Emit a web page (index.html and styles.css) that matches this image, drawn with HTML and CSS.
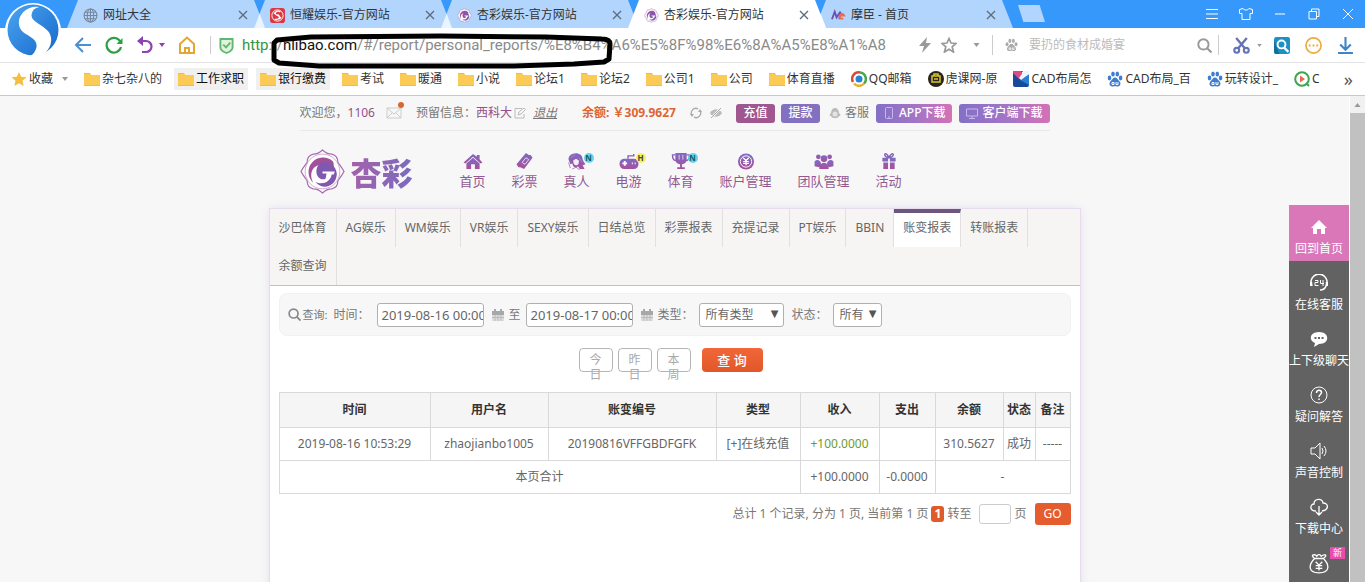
FILE: index.html
```html
<!DOCTYPE html>
<html lang="zh-CN">
<head>
<meta charset="utf-8">
<title>杏彩娱乐-官方网站</title>
<link rel="stylesheet" href="styles.css">
</head>
<body>
<svg class="defs" aria-hidden="true">
  <defs>
    <linearGradient id="purple" x1="0" y1="0" x2="0" y2="1"><stop offset="0" stop-color="#7c6cc4"/><stop offset="1" stop-color="#a94f9b"/></linearGradient>
    <linearGradient id="swirl" x1="0" y1="0" x2="1" y2="1"><stop offset="0" stop-color="#4aa5f2"/><stop offset="1" stop-color="#1668c9"/></linearGradient>
    <symbol id="folder" viewBox="0 0 16 14"><path d="M0 1h6l1 2h9v11H0z" fill="#f0bd3c"/><path d="M0 2h6l1 1h9v10H0z" fill="#fccb55"/></symbol>
    <symbol id="paw" viewBox="0 0 16 16"><ellipse cx="2.500" cy="7" rx="1.800" ry="2.400"/><ellipse cx="6" cy="3" rx="1.800" ry="2.600"/><ellipse cx="10.300" cy="3" rx="1.800" ry="2.600"/><ellipse cx="13.600" cy="7" rx="1.800" ry="2.400"/><path d="M8 6.500c2 0 2.700 2 4 3.200 3 2.800 1 6.300-2 5.700-1.300-.3-2.700-.3-4 0-3 .6-5-2.900-2-5.700C5.300 8.500 6 6.500 8 6.500z"/><path d="M5 11.500h2v2H5zM9 11v2.500h2V11" fill="none" stroke="#fff"/></symbol>
    <symbol id="close" viewBox="0 0 10 10"><path d="M1 1l8 8M9 1l-8 8" fill="none" stroke="currentColor" stroke-width="1.300"/></symbol>
    <symbol id="caret" viewBox="0 0 6 4"><path d="M0 0h6L3 4z" fill="currentColor"/></symbol>
    <symbol id="flower" viewBox="0 0 44 44"><path d="M22 1c3 3 5 4 9 4 4 1 6 3 6 8 2 3 4 5 6 9-2 4-4 6-6 9 0 5-2 7-6 8-4 0-6 1-9 4-3-3-5-4-9-4-4-1-6-3-6-8-2-3-4-5-6-9 2-4 4-6 6-9 0-5 2-7 6-8 4 0 6-1 9-4z" fill="#fff" stroke="#a76bb0" stroke-width="1.200"/><circle cx="22" cy="22" r="17" fill="none" stroke="#c69acb" stroke-width=".8"/><path d="M32 12A14 14 0 1 0 13 33c-4-7-2-15 5-17 4-1 8 0 10 3l5-2c0-2 0-4-1-5z" fill="#a2509c"/><path d="M30 14c-6-4-14 0-14 8 0 6 5 9 9 7l1-5h-4v-2h12l-1 3h-2c-1 7-9 11-16 7 7 9 20 5 21-7 0-4-2-8-6-11z" fill="#8058ad"/></symbol>
    <symbol id="calendar" viewBox="0 0 12 12"><path d="M0 2h12v4H0zM2 0h2v2H2zM8 0h2v2H8z" fill="#a8a8a8"/><path d="M0 6h12v6H0z" fill="#ddd"/><path d="M0 8.500h12M3 6v6M6 6v6M9 6v6" stroke="#bbb"/></symbol>
    <symbol id="lens" viewBox="0 0 14 14"><circle cx="6" cy="6" r="4.800" fill="none" stroke="currentColor" stroke-width="1.800"/><path d="M9.500 9.500l4 4" stroke="currentColor" stroke-width="2"/></symbol>
  </defs>
</svg>

<header class="browser">
  <svg class="browser-logo" viewBox="0 0 60 56"><circle cx="31" cy="30" r="28" fill="#fff"/><circle cx="31" cy="29" r="25.500" fill="url(#swirl)"/><path d="M37 6C20 4 11 22 21 31c6 5 18 8 12 19-1 3-4 5-8 6 19 4 30-15 21-26C39 22 27 20 30 12c1-4 4-5 7-6z" fill="#fff"/></svg>
  <div class="tabs">
    <div class="tab"><svg class="fav" viewBox="0 0 14 14"><g fill="none" stroke="#75879d"><circle cx="7" cy="7" r="6"/><ellipse cx="7" cy="7" rx="3" ry="6"/><path d="M1 7h12M7 1v12M2 4h10M2 10h10"/></g></svg><span>网址大全</span><button aria-label="关闭"><svg><use href="#close"/></svg></button></div>
    <div class="tab"><svg class="fav" viewBox="0 0 16 16"><rect width="16" height="16" rx="3" fill="#dc3844"/><circle cx="8" cy="8" r="6" fill="none" stroke="#fff"/><path d="M11 4C6 2 4 6 7 7.500s5 2 2 4.500M5 12c5 1 7-3 3-5M4 6l3-2M12 10l-3 2" fill="none" stroke="#fff" stroke-width="1.300"/></svg><span>恒耀娱乐-官方网站</span><button aria-label="关闭"><svg><use href="#close"/></svg></button></div>
    <div class="tab"><svg class="fav"><use href="#flower"/></svg><span>杏彩娱乐-官方网站</span><button aria-label="关闭"><svg><use href="#close"/></svg></button></div>
    <div class="tab active"><svg class="fav"><use href="#flower"/></svg><span>杏彩娱乐-官方网站</span><button aria-label="关闭"><svg><use href="#close"/></svg></button></div>
    <div class="tab"><svg class="fav" viewBox="0 0 16 14"><path d="M1 11L4 3l2 6 4-6-1 8" fill="none" stroke="#6c4fb0" stroke-width="2"/><path d="M10 7h4a2.500 2.500 0 1 0-1 3" fill="none" stroke="#ee6a4c" stroke-width="2"/></svg><span>摩臣 - 首页</span><button aria-label="关闭"><svg><use href="#close"/></svg></button></div>
    <button class="new-tab" aria-label="新标签页"></button>
    <div class="window-controls">
      <button aria-label="菜单"><svg viewBox="0 0 14 14"><path d="M1 2.500h12M1 7h12M1 11.500h12"/></svg></button>
      <button aria-label="皮肤"><svg viewBox="0 0 14 14"><path d="M4 1.500c1 2 5 2 6 0l3.500 1v4H11v6H3v-6H.500v-4z"/></svg></button>
      <button aria-label="最小化"><svg viewBox="0 0 14 14"><path d="M2 7h10"/></svg></button>
      <button aria-label="还原"><svg viewBox="0 0 14 14"><path d="M2 4.500h7.500V12H2zM4.500 4V2H12v7.500H10"/></svg></button>
      <button aria-label="关闭窗口"><svg viewBox="0 0 14 14"><path d="M2 2l10 10M12 2L2 12"/></svg></button>
    </div>
  </div>

  <div class="toolbar">
    <div class="nav-tools">
      <button aria-label="后退"><svg viewBox="0 0 18 18"><path d="M17 9H2M9 2L2 9l7 7" fill="none" stroke="#4a8fd0" stroke-width="2"/></svg></button>
      <button aria-label="刷新"><svg viewBox="0 0 18 18"><path d="M15.500 6A7.300 7.300 0 1 0 16 11" fill="none" stroke="#2ba143" stroke-width="2.200"/><path d="M17.500 2v6h-6z" fill="#2ba143"/></svg></button>
      <button aria-label="撤销"><svg viewBox="0 0 18 18"><path d="M3 5h7a5.500 5.500 0 0 1 0 11H6" fill="none" stroke="#8b42b3" stroke-width="2.200"/><path d="M7 0v10L1 5z" fill="#8b42b3"/></svg></button>
      <svg class="caret violet"><use href="#caret"/></svg>
      <button aria-label="主页"><svg viewBox="0 0 18 18"><path d="M2 8l7-6.500L16 8v9H2zM7 17v-5h4v5" fill="none" stroke="#e6a530" stroke-width="2"/></svg></button>
    </div>
    <div class="address">
      <svg class="shield" viewBox="0 0 16 18"><path d="M1.500 2h13v9c0 3-4 5-6.500 6-2.500-1-6.500-3-6.500-6z" fill="#dff3e1" stroke="#61b86c" stroke-width="2"/><path d="M4.500 8l3 3L12 6" fill="none" stroke="#61b86c" stroke-width="2"/></svg>
      <span class="url"><span class="scheme">http</span>://<b>nlibao.com</b>/#/report/personal_reports/%E8%B4%A6%E5%8F%98%E6%8A%A5%E8%A1%A8</span>
      <svg class="marker" viewBox="0 0 344 40"><path d="M5 29V12l3-3 34-3 130-1 105 1 56 2q8 0 8 5l-1 15-5 3-30 2-60 2H50l-40-3z" fill="none" stroke="#000" stroke-width="5" stroke-linejoin="round"/></svg>
    </div>
    <div class="address-tools">
      <svg class="bolt" viewBox="0 0 12 16"><path d="M8 0L0 9h5l-2 7 9-10H7z" fill="#999"/></svg>
      <svg class="star" viewBox="0 0 16 16"><path d="M8 1.500l2 4.500 5 .5-3.800 3.300L12.500 15 8 12.200 3.500 15l1.300-5.200L1 6.500 6 6z" fill="none" stroke="#999" stroke-width="1.700"/></svg>
      <svg class="caret"><use href="#caret"/></svg>
    </div>
    <div class="search">
      <svg class="paw"><use href="#paw"/></svg>
      <input type="text" aria-label="搜索" placeholder="要扔的食材成婚宴">
      <svg class="lens"><use href="#lens"/></svg>
    </div>
    <div class="extensions">
      <svg class="tool" viewBox="0 0 16 16"><path d="M3 1l8.500 10M13 1L4.500 11" stroke="#6673b5" stroke-width="2.200"/><g fill="none" stroke="#6673b5" stroke-width="2"><circle cx="3.500" cy="12.500" r="2.300"/><circle cx="12.500" cy="12.500" r="2.300"/></g></svg>
      <svg class="caret small"><use href="#caret"/></svg>
      <svg class="tool" viewBox="0 0 16 16"><rect x="1" width="15" height="16" rx="2" fill="#1c91c4"/><path d="M1 3l5 13H3a2 2 0 0 1-2-2z" fill="#126f9c"/><circle cx="8" cy="7" r="3.700" fill="none" stroke="#fff" stroke-width="1.800"/><path d="M10.500 10l4 4" stroke="#fff" stroke-width="2"/></svg>
      <svg class="tool" viewBox="0 0 18 18"><circle cx="9" cy="9" r="8" fill="none" stroke="#ecab43" stroke-width="1.800"/><path d="M4 8h2v2H4zM8 8h2v2H8zM12 8h2v2h-2z" fill="#ecab43"/></svg>
      <svg class="tool" viewBox="0 0 16 16"><path d="M8 0v11M3 7l5 5 5-5M1 15h14" fill="none" stroke="#3b86c8" stroke-width="2"/></svg>
    </div>
  </div>

  <nav class="bookmarks">
    <a href="#"><svg viewBox="0 0 16 16"><path d="M8 1l2.200 4.700 5.300.6-4 3.500 1.200 5.200L8 12.300 3.300 15l1.200-5.200-4-3.500 5.300-.6z" fill="#f6bd42"/></svg>收藏<svg class="caret"><use href="#caret"/></svg></a>
    <a href="#"><svg><use href="#folder"/></svg>杂七杂八的</a>
    <a href="#" class="lit"><svg><use href="#folder"/></svg>工作求职</a>
    <a href="#" class="lit"><svg><use href="#folder"/></svg>银行缴费</a>
    <a href="#"><svg><use href="#folder"/></svg>考试</a>
    <a href="#"><svg><use href="#folder"/></svg>暖通</a>
    <a href="#"><svg><use href="#folder"/></svg>小说</a>
    <a href="#"><svg><use href="#folder"/></svg>论坛1</a>
    <a href="#"><svg><use href="#folder"/></svg>论坛2</a>
    <a href="#"><svg><use href="#folder"/></svg>公司1</a>
    <a href="#"><svg><use href="#folder"/></svg>公司</a>
    <a href="#"><svg><use href="#folder"/></svg>体育直播</a>
    <a href="#"><svg viewBox="0 0 16 16"><g fill="none" stroke-width="2.500"><path d="M9 1.500a6.500 6.500 0 0 1 4 11" stroke="#4aa64a"/><path d="M13 12.500a6.500 6.500 0 0 1-10 0" stroke="#edae2e"/><path d="M2 11A6.500 6.500 0 0 1 9 1.500" stroke="#dc4636"/></g><circle cx="8" cy="8" r="3.500" fill="#2782cf"/></svg>QQ邮箱</a>
    <a href="#"><svg viewBox="0 0 16 16"><circle cx="8" cy="8" r="8" fill="#27251b"/><path d="M4 5h8v6H4zM6 8h4M6 5V3h4v2" fill="none" stroke="#d8c52e" stroke-width="1.500"/></svg>虎课网-原</a>
    <a href="#"><svg viewBox="0 0 16 16"><path d="M0 0h10L7 4l9 2v8a2 2 0 0 1-2 2H2a2 2 0 0 1-2-2z" fill="#174a9b"/><path d="M0 0h8l2 4-4 4-6-6z" fill="#e24a86"/><path d="M16 3v11L7 9z" fill="#2a7fcf"/><path d="M11 0h5v3L8 9 6 7z" fill="#eef4fb"/></svg>CAD布局怎</a>
    <a href="#"><svg class="blue"><use href="#paw"/></svg>CAD布局_百</a>
    <a href="#"><svg class="blue"><use href="#paw"/></svg>玩转设计_</a>
    <a href="#"><svg viewBox="0 0 16 16"><circle cx="8" cy="8" r="6.800" fill="none" stroke="#3ca550" stroke-width="2"/><path d="M12 12l3 3" stroke="#3ca550" stroke-width="2"/><path d="M6 4.500v7L11 8z" fill="#e66a50"/></svg>C</a>
    <button class="more" aria-label="更多书签">»</button>
  </nav>
</header>

<div class="viewport">
  <div class="page">
    <div class="site-head">
      <div class="account">
        <span>欢迎您，<em>1106</em></span>
        <span class="mail"><svg viewBox="0 0 18 12"><path d="M1 1h14v10H1zM1 1l7 6 7-6M1 11l5-5M15 11l-5-5" fill="none" stroke="#ccc"/></svg><i></i></span>
        <span class="info">预留信息：<em>西科大</em><svg viewBox="0 0 12 12"><path d="M8 1.500H1v9.500h9V7M4 8l1-3 5-4 1.500 1.500L7 7z" fill="none" stroke="#bbb"/></svg></span>
        <a class="logout" href="#">退出</a>
        <strong class="balance">余额: ￥309.9627</strong>
        <svg class="mini" viewBox="0 0 12 12"><path d="M2 8.500A4.700 4.700 0 0 1 8 1.800M10 3.500A4.700 4.700 0 0 1 4 10.200" fill="none" stroke="#aaa" stroke-width="1.300"/><path d="M0 7h4l-2 3zM8 5h4l-2-3z" fill="#aaa"/></svg>
        <svg class="mini" viewBox="0 0 12 12"><path d="M0 6c3-5 9-5 12 0-3 5-9 5-12 0z" fill="#bbb"/><path d="M1 11.500L11 .500" stroke="#f7f7f7" stroke-width="2"/><path d="M1 11L11 1" stroke="#aaa"/></svg>
        <button class="btn plum">充值</button>
        <button class="btn violet-bg">提款</button>
        <span class="service"><svg viewBox="0 0 12 12"><path d="M2 6a4 5 0 0 1 8 0c2 2 2 3 0 3-1 3-7 3-8 0-2 0-2-1 0-3z" fill="#bbb"/><circle cx="6" cy="7" r="2.500" fill="#e4e4e4"/></svg>客服</span>
        <button class="btn fade"><svg viewBox="0 0 12 12"><rect x="2.500" y=".500" width="7" height="11" rx="1" fill="none" stroke="#c4b8f0"/><path d="M5 10h2" stroke="#c4b8f0"/></svg>APP下载</button>
        <button class="btn fade"><svg viewBox="0 0 12 12"><path d="M.500 2h11v7H.500zM3 11.500h6M6 9v2" fill="none" stroke="#c4b8f0"/></svg>客户端下载</button>
      </div>
      <div class="brand-row">
        <a class="brand" href="#"><svg><use href="#flower"/></svg><span>杏彩</span></a>
        <nav class="main-nav">
          <a href="#"><svg viewBox="0 0 20 18"><path d="M10 1L0 10l2 1 8-7 8 7 2-1-3-3V2h-3v2z"/><path d="M3 11l7-6 7 6v6h-5v-5H8v5H3z"/></svg>首页</a>
          <a href="#"><svg viewBox="0 0 20 18"><path d="M11 0l3 2 2 0 2 3-9 12-4-2-2 0-2-3z"/><path d="M7 10l4-5 3 2-4 5z" fill="none" stroke="#e6def2"/></svg>彩票</a>
          <a href="#"><svg viewBox="0 0 20 18"><path d="M5 1c5-2 11 0 11 6 1 2 2 4 3 5l-3 1 2 4h-5l-2-3-2 2-3-2-1-3-2 1-2-5c0-3 1-5 4-6z"/><path d="M6 8l3-2 3 2c0 4-1 5-3 5s-3-2-3-5z" fill="#f2edf7"/><path d="M3 5l5-3M12 5l4 5M5 17l4-2 4 3M1 10l2 6" fill="none" stroke="#a685c2"/></svg>真人<i class="tag cyan">N</i></a>
          <a href="#"><svg viewBox="0 0 20 18"><rect x="0" y="6" width="20" height="11" rx="5"/><path d="M9 6V3h6V1" fill="none" stroke="#8a62b5" stroke-width="1.500"/><path d="M3 11h5M5.500 8.500v5M13 11h1M16 11h1" stroke="#fff" stroke-width="2"/></svg>电游<i class="tag yellow">H</i></a>
          <a href="#"><svg viewBox="0 0 20 18"><path d="M4 0h12v7c0 4-4 5-5 5v3h3v2H6v-2h3v-3c-1 0-5-1-5-5z"/><path d="M4 2H1c0 4 1 6 4 6M16 2h3c0 4-1 6-4 6" fill="none" stroke="#8a62b5" stroke-width="1.500"/><path d="M8 2v5M12 2v5" stroke="#ddd0eb"/></svg>体育<i class="tag cyan">N</i></a>
          <a href="#"><svg viewBox="0 0 20 18"><circle cx="10" cy="9" r="8.500"/><circle cx="10" cy="9" r="6" fill="none" stroke="#fff"/><path d="M7 5l3 3 3-3M10 8v5M7 9h6M7 11h6" fill="none" stroke="#fff" stroke-width="1.300"/></svg>账户管理</a>
          <a href="#"><svg viewBox="0 0 20 18"><circle cx="4" cy="4" r="2.500"/><circle cx="16" cy="4" r="2.500"/><circle cx="10" cy="6" r="3.500"/><path d="M0 14V9q3-3 6 0l1 2-2 4zM20 14V9q-3-3-6 0l-1 2 2 4zM5 17c0-9 10-9 10 0z"/></svg>团队管理</a>
          <a href="#"><svg viewBox="0 0 20 18"><path d="M3 5h6v4H3zM11 5h6v4h-6zM4 10h5v7H4zM11 10h5v7h-5z"/><path d="M10 5C4 4 5 0 7 1s2 2 3 4c1-2 1-3 3-4s3 3-3 4z" fill="none" stroke="#8063b9" stroke-width="1.500"/></svg>活动</a>
        </nav>
      </div>
    </div>

    <main class="panel">
      <nav class="report-tabs">
        <a href="#">沙巴体育</a><a href="#">AG娱乐</a><a href="#">WM娱乐</a><a href="#">VR娱乐</a><a href="#">SEXY娱乐</a><a href="#">日结总览</a><a href="#">彩票报表</a><a href="#">充提记录</a><a href="#">PT娱乐</a><a href="#">BBIN</a><a href="#" class="current">账变报表</a><a href="#">转账报表</a><a href="#">余额查询</a>
      </nav>
      <div class="panel-body">
        <form class="filters">
          <svg class="find"><use href="#lens"/></svg>
          <span class="find-label">查询:</span>
          <label for="from">时间：</label>
          <input id="from" class="date" type="text" value="2019-08-16 00:00:00">
          <svg class="cal"><use href="#calendar"/></svg>
          <label for="to">至</label>
          <input id="to" class="date" type="text" value="2019-08-17 00:00:00">
          <svg class="cal"><use href="#calendar"/></svg>
          <label for="kind">类型：</label>
          <span class="pick wide"><select id="kind"><option>所有类型</option></select></span>
          <label for="state">状态：</label>
          <span class="pick"><select id="state"><option>所有</option></select></span>
        </form>
        <div class="ranges">
          <button class="range">今日</button>
          <button class="range">昨日</button>
          <button class="range">本周</button>
          <button class="query">查 询</button>
        </div>
        <table class="records">
          <colgroup><col class="c-time"><col class="c-user"><col class="c-id"><col class="c-type"><col class="c-in"><col class="c-out"><col class="c-bal"><col class="c-state"><col class="c-note"></colgroup>
          <thead><tr><th>时间</th><th>用户名</th><th>账变编号</th><th>类型</th><th>收入</th><th>支出</th><th>余额</th><th>状态</th><th>备注</th></tr></thead>
          <tbody>
            <tr><td>2019-08-16 10:53:29</td><td>zhaojianbo1005</td><td>20190816VFFGBDFGFK</td><td>[+]在线充值</td><td class="gain">+100.0000</td><td></td><td>310.5627</td><td>成功</td><td>-----</td></tr>
            <tr><td colspan="4">本页合计</td><td>+100.0000</td><td>-0.0000</td><td colspan="3">-</td></tr>
          </tbody>
        </table>
        <form class="pager">
          <span>总计 1 个记录, 分为 1 页, 当前第 1 页</span><b>1</b>
          <label for="goto">转至</label><input id="goto" type="text"><span>页</span>
          <button type="button">GO</button>
        </form>
      </div>
    </main>

    <aside class="side">
      <a href="#" class="home"><svg viewBox="0 0 18 18"><path d="M9 2l8 8h-2v6h-4v-5H7v5H3v-6H1z" fill="#fff" stroke="none"/></svg>回到首页</a>
      <a href="#"><svg viewBox="0 0 18 18"><path d="M2 12a8 8 0 1 1 14 0c-1 3-3 4-6 4" stroke-width="1.500"/><path d="M1 8v4M17 8v4" stroke-width="2.500"/><path d="M5 6.500h3v2H5v3h3.500M10.500 6v3.500H14M13 6v6"/></svg>在线客服</a>
      <a href="#"><svg viewBox="0 0 18 18"><path d="M9 2c11 0 11 12 0 12l-5 3 1-4c-7-3-5-11 4-11z" fill="#fff" stroke="none"/><path d="M4.500 8h2M8 8h2M11.500 8h2" stroke="#626262" stroke-width="2"/></svg>上下级聊天</a>
      <a href="#"><svg viewBox="0 0 18 18"><circle cx="9" cy="9" r="8"/><path d="M6.500 7c0-4 5-3.500 5-.5 0 2-2.500 2-2.500 4.500M9 12.500v1.500" stroke-width="1.500"/></svg>疑问解答</a>
      <a href="#"><svg viewBox="0 0 18 18"><path d="M1 6h4l5-5v16l-5-5H1zM12 6q2 3 0 6M14 4q4 5 0 10"/></svg>声音控制</a>
      <a href="#"><svg viewBox="0 0 18 18"><path d="M6 13C-1 13 0 6 4 6c0-6 9-6 9-1 6 0 6 7-1 8M9 8v9M6 14l3 3 3-3" stroke-width="1.300"/></svg>下载中心</a>
      <a href="#" aria-label="红包"><svg class="bag" viewBox="0 0 20 18"><path d="M6 4C1 9-1 17 10 17S19 9 14 4zM6 4C1 0 7 0 8 2c1-2 3-2 4 0 2-2 7-2 2 2M7 7l3 3 3-3M10 10v5M7 10.500h6M7 13h6" stroke-width="1.200"/></svg><i class="new">新</i></a>
    </aside>
  </div>
  <div class="scrollbar"><svg class="caret up"><use href="#caret"/></svg></div>
</div>
</body>
</html>
```

FILE: styles.css
```css
* { box-sizing: border-box; }

body {
  display: flex;
  flex-direction: column;
  height: 100vh;
  margin: 0;
  overflow: hidden;
  background: #f7f7f7;
  color: #777;
  font: 12px/18px "Noto Sans", "Noto Sans CJK SC", sans-serif;
}

button, input, select { margin: 0; font: inherit; color: inherit; }
button { padding: 0; border: 0; background: none; }
a { color: inherit; text-decoration: none; }
svg { display: block; flex: none; }
em, i { font-style: normal; }
.defs { position: absolute; width: 0; height: 0; }

/* Browser frame */
.browser { position: relative; flex: none; background: #fff; border-bottom: 1px solid #c9c9cb; color: #333; }
.browser-logo { position: absolute; left: 2px; top: 1px; width: 60px; height: 56px; z-index: 2; }
.tabs { display: flex; height: 28px; padding-left: 67px; background: #3798fc; }
.tab {
  position: relative;
  display: flex;
  align-items: center;
  gap: 5px;
  width: 198px;
  margin-right: -11px;
  padding: 2px 17px 0 16px;
  background: #b2d5fe;
  clip-path: polygon(11px 0, calc(100% - 11px) 0, 100% 100%, 0 100%);
}
.tab::before {
  content: "";
  position: absolute;
  left: 0;
  bottom: 0;
  width: 11px;
  height: 15px;
  background: #eaf4ff;
  clip-path: polygon(50% 0, 100% 100%, 0 100%);
}
.tab:first-child::before { display: none; }
.tab.active { z-index: 1; background: #fff; }
.tab.active::before { display: none; }
.tab .fav { width: 15px; height: 15px; }
.tab span { flex: 1; white-space: nowrap; }
.tab svg { width: 10px; height: 10px; color: #5b6b7c; }
.new-tab { width: 27px; height: 17px; margin: 5px 0 0 16px; background: #b2d5fe; clip-path: polygon(0 0, 80% 0, 100% 100%, 20% 100%); }
.window-controls { display: flex; align-items: center; gap: 20px; margin-left: auto; padding-right: 10px; }
.window-controls svg { width: 14px; height: 14px; fill: none; stroke: #fff; }

.toolbar { display: flex; align-items: center; height: 35px; padding-left: 74px; border-bottom: 1px solid #e3e3e5; }
.caret { width: 7px; height: 4px; color: #999; }
.nav-tools { display: flex; align-items: center; gap: 13px; padding-right: 14px; border-right: 1px solid #ccc; }
.nav-tools svg { width: 18px; height: 18px; }
.nav-tools .caret { width: 6px; height: 4px; margin: 0 0 0 -8px; color: #8b42b3; }
.address { position: relative; display: flex; flex: 1; align-items: center; gap: 8px; min-width: 0; padding-left: 8px; }
.shield { width: 15px; height: 17px; }
.url { font: 15px/20px Roboto, sans-serif; color: #8a8a8a; white-space: nowrap; }
.scheme { color: #35963c; }
.url b { font-weight: 400; color: #111; }
.marker { position: absolute; left: 58px; top: -4px; width: 344px; height: 40px; }
.address-tools { display: flex; align-items: center; gap: 16px; padding-right: 12px; border-right: 1px solid #ccc; height: 20px; }
.bolt { width: 12px; height: 16px; }
.star { width: 16px; height: 16px; margin-left: -6px; }
.search { display: flex; align-items: center; gap: 11px; width: 226px; height: 20px; padding: 0 6px 0 12px; border-right: 1px solid #ccc; }
.search .paw { width: 13px; height: 14px; fill: #aaa; }
.search input { flex: 1; min-width: 0; padding: 0; border: 0; outline: 0; background: none; }
.search input::placeholder { color: #bbb; opacity: 1; }
.search .lens { width: 15px; height: 15px; color: #999; }
.extensions { display: flex; align-items: center; gap: 15px; padding: 0 11px 0 14px; }
.tool { width: 17px; height: 17px; }
.extensions .small { width: 5px; height: 3px; margin: 0 -4px 0 -8px; }

.bookmarks { display: flex; align-items: center; gap: 16px; height: 32px; padding: 0 12px 0 11px; overflow: hidden; white-space: nowrap; }
.bookmarks a { display: flex; align-items: center; gap: 2px; }
.bookmarks a svg { width: 16px; height: 16px; }
.bookmarks a .caret { width: 6px; height: 4px; margin: 0 0 0 7px; }
.bookmarks .lit { background: #f0f0f1; box-shadow: 0 0 0 4px #f0f0f1; height: 14px; color: #111; }
.bookmarks .blue { fill: #3e7ed0; }
.more { margin-left: auto; font-size: 18px; color: #555; }

/* Page */
.viewport { display: flex; flex: 1; min-height: 0; }
.page { position: relative; flex: 1; min-width: 0; overflow: hidden; }
.scrollbar { width: 16px; padding-top: 17px; border-left: 1px solid #fff; background: linear-gradient(#f1f1f1 17px, #c1c1c1 17px); }
.scrollbar .up { width: 7px; height: 4px; margin: -10px auto 0; transform: rotate(180deg); }

.site-head { width: 750px; margin: 0 auto; }
.account { display: flex; align-items: center; height: 35px; border-bottom: 1px solid #e9e9e9; white-space: nowrap; }
.account em { color: #94508b; }
.mail { position: relative; margin-left: 11px; }
.mail svg { width: 18px; height: 12px; }
.mail i { position: absolute; right: 0; top: -5px; width: 6px; height: 6px; border-radius: 50%; background: #dc6534; }
.info { display: flex; align-items: center; margin-left: 12px; }
.info svg { width: 12px; height: 12px; margin-left: 2px; }
.logout { margin-left: 7px; font-style: italic; text-decoration: underline; }
.balance { margin: 0 14px 0 25px; color: #df6434; }
.mini { width: 12px; height: 12px; margin-right: 8px; }
.btn { display: flex; align-items: center; justify-content: center; gap: 4px; height: 19px; border-radius: 3px; color: #fff; font-weight: 500; }
.plum { width: 39px; margin: 0 6px; background: #a0568f; }
.violet-bg { width: 39px; background: #8370c0; }
.service { display: flex; align-items: center; gap: 4px; margin: 0 7px 0 9px; }
.service svg { width: 12px; height: 12px; }
.fade { padding: 0 7px; background: linear-gradient(90deg, #8370c6, #a475c6 55%, #d671b4); }
.fade + .fade { margin-left: auto; }
.fade svg { width: 12px; height: 12px; }

.brand-row { display: flex; align-items: center; height: 78px; padding-top: 3px; }
.brand { display: flex; align-items: center; gap: 6px; width: 160px; }
.brand svg { width: 45px; height: 45px; }
.brand span {
  font: 900 31px/40px "Noto Sans CJK SC", sans-serif;
  color: transparent;
  background: linear-gradient(90deg, #a461aa, #7a6bc0);
  background-clip: text;
}
.main-nav { display: flex; gap: 26px; font-size: 13px; line-height: 18px; color: #925a91; }
.main-nav a { position: relative; display: flex; flex-direction: column; align-items: center; gap: 2px; white-space: nowrap; }
.main-nav svg { width: 20px; height: 17px; fill: url(#purple); }
.tag { position: absolute; left: 20px; top: 0; width: 10px; height: 10px; border-radius: 50%; font: 700 8px/10px "Noto Sans", sans-serif; text-align: center; color: #155b66; }
.cyan { background: #63d5ea; }
.yellow { background: #f4f25c; color: #444; }

.panel { width: 810px; min-height: 100%; margin: 0 auto; background: #fff; box-shadow: 0 0 0 1px #e6dcec, 0 0 10px #e2d9ee; }
.report-tabs { display: flex; flex-wrap: wrap; background: #f6f5f4; border-bottom: 1px solid #c5c1c0; color: #666; }
.report-tabs a { height: 38px; padding: 0 9px; border-right: 1px solid #e2e0df; line-height: 38px; }
.report-tabs .current { border-top: 4px solid #6d5580; background: #fff; line-height: 30px; }

.panel-body { padding: 7px 9px; }
.filters { display: flex; align-items: center; height: 43px; padding: 0 8px; border: 1px solid #f1f1f1; border-radius: 8px; background: #f7f7f7; white-space: nowrap; }
.find { width: 13px; height: 13px; color: #888; }
.find-label { margin: 0 6px 0 2px; font-size: 11px; }
.filters input, .filters select { height: 24px; border: 1px solid #b0b0b0; border-radius: 3px; background: #fff; color: #666; }
.date { width: 107px; padding: 0 0 0 3px; font-size: 13px; }
.filters label + .date { margin-left: 8px; }
.filters label[for="to"] + .date { margin-left: 6px; }
.cal { width: 12px; height: 12px; margin: 0 4px 0 8px; }
.pick { position: relative; width: 49px; margin-left: 5px; }
.pick.wide { width: 85px; margin-right: 8px; }
.pick select { width: 100%; padding: 0 6px; appearance: none; }
.pick::after { content: "▼"; position: absolute; right: 5px; top: 2px; font: 10px/18px "DejaVu Sans", sans-serif; color: #555; pointer-events: none; }

.ranges { display: flex; gap: 5px; height: 24px; margin: 12px 0 20px 300px; }
.range { display: flex; align-items: flex-start; width: 34px; height: 24px; padding: 3px 10px 0; border: 1px solid #b5b5b5; border-radius: 4px; line-height: 15px; color: #aaa; }
.query { width: 61px; height: 24px; margin-left: 6px; border-radius: 4px; background: linear-gradient(#f2673a, #e2572a); color: #fff; font-size: 13px; font-weight: 500; }

.records { width: 100%; border-collapse: collapse; table-layout: fixed; text-align: center; color: #666; }
.records th, .records td { height: 33px; padding: 0; border: 1px solid #d9d9d9; white-space: nowrap; }
.records th { height: 35px; background: #f5f5f5; color: #333; }
.records .gain { color: #6f9b28; }
.c-time { width: 151px; }
.c-user { width: 118px; }
.c-id { width: 168px; }
.c-type { width: 84px; }
.c-in { width: 79px; }
.c-out { width: 56px; }
.c-bal { width: 68px; }
.c-state { width: 32px; }
.c-note { width: 35px; }

.pager { display: flex; align-items: center; justify-content: flex-end; gap: 3px; margin-top: 9px; }
.pager b { width: 13px; height: 16px; border-radius: 3px; background: #de5b2c; color: #fff; line-height: 16px; text-align: center; }
.pager input { width: 32px; height: 20px; margin-left: 5px; padding: 0 4px; border: 1px solid #ccc; border-radius: 3px; }
.pager button { width: 36px; height: 22px; margin-left: 5px; border-radius: 3px; background: #e55c2e; color: #fff; }

/* Side menu over the page edge */
.side { position: absolute; right: 0; top: 109px; bottom: 0; width: 60px; overflow: hidden; background: #626262; color: #fff; }
.side a { position: relative; display: flex; flex-direction: column; align-items: center; gap: 4px; height: 56px; padding-top: 13px; white-space: nowrap; }
.side svg { width: 18px; height: 18px; fill: none; stroke: #fff; }
.side .home { background: #d977b9; }
.side .bag { width: 22px; height: 20px; }
.new { position: absolute; right: 4px; top: 6px; width: 15px; height: 12px; background: #e94cad; font-size: 9px; line-height: 12px; text-align: center; }
```
